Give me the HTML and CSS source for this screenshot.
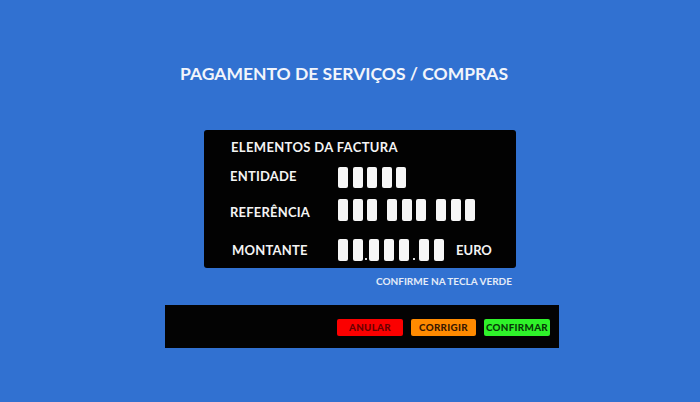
FILE: index.html
```html
<!DOCTYPE html>
<html>
<head>
<meta charset="utf-8">
<link rel="stylesheet" href="styles.css">
</head>
<body>
<div class="screen">
  <h1 class="title">PAGAMENTO DE SERVIÇOS / COMPRAS</h1>
  <div class="panel">
    <div class="panel-head">ELEMENTOS DA FACTURA</div>
    <div class="row row-ent">
      <div class="label">ENTIDADE</div>
      <div class="digits">
        <span class="d"></span><span class="d"></span><span class="d"></span><span class="d"></span><span class="d"></span>
      </div>
    </div>
    <div class="row row-ref">
      <div class="label">REFERÊNCIA</div>
      <div class="digits">
        <span class="d"></span><span class="d"></span><span class="d"></span>
        <span class="sp"></span>
        <span class="d"></span><span class="d"></span><span class="d"></span>
        <span class="sp"></span>
        <span class="d"></span><span class="d"></span><span class="d"></span>
      </div>
    </div>
    <div class="row row-mon">
      <div class="label label-mon">MONTANTE</div>
      <div class="digits digits-mon">
        <span class="d"></span><span class="d"></span>
        <span class="dot dot1"></span>
        <span class="d"></span><span class="d"></span><span class="d"></span>
        <span class="dot dot2"></span>
        <span class="d"></span><span class="d"></span>
        <span class="unit">EURO</span>
      </div>
    </div>
  </div>
  <div class="hint">CONFIRME NA TECLA VERDE</div>
  <div class="bar">
    <button class="btn btn-red">ANULAR</button>
    <button class="btn btn-orange">CORRIGIR</button>
    <button class="btn btn-green">CONFIRMAR</button>
  </div>
</div>
</body>
</html>
```
FILE: styles.css
```css
html, body {
  margin: 0;
  padding: 0;
}
body {
  width: 700px;
  height: 402px;
  background: #3171d1;
  font-family: Lato, "Open Sans", "DejaVu Sans", sans-serif;
  font-weight: 700;
  overflow: hidden;
}
.screen {
  display: flex;
  flex-direction: column;
  align-items: flex-start;
  padding-top: 64px;
}
.title {
  margin: 0 0 0 180px;
  font-size: 17.5px;
  line-height: 20px;
  font-weight: 700;
  color: #f2f5fb;
  letter-spacing: 0;
}
.panel {
  margin: 46px 0 0 204px;
  width: 312px;
  height: 138px;
  box-sizing: border-box;
  background: #020202;
  border-radius: 3px;
  padding: 10px 0 0 26px;
  color: #f4f4f4;
  font-size: 13px;
}
.panel-head {
  line-height: 14px;
  font-size: 13px;
  letter-spacing: 0.35px;
  padding-left: 1px;
}
.row {
  display: flex;
  align-items: center;
  height: 22px;
}
.row-ent { margin-top: 12px; }
.row-ref { margin-top: 11px; }
.row-mon { margin-top: 18px; }
.label {
  width: 108px;
  font-size: 13px;
  letter-spacing: 0.2px;
}
.row-ent .label { margin-top: -2px; }
.row-ref .label { margin-top: 3px; }
.label-mon { padding-left: 2px; width: 106px; }
.digits {
  display: flex;
  align-items: center;
  gap: 4.5px;
}
.d {
  width: 10px;
  height: 21px;
  background: #f6f6f6;
  border-radius: 2px;
}
.row-ref .d { height: 22px; }
.sp { width: 1px; }
.digits-mon { gap: 5px; align-items: center; }
.digits-mon .d { height: 22px; }
.dot {
  width: 2px;
  height: 2px;
  background: #ddd;
  align-self: flex-end;
  margin: 0 -3px 1px -3px;
}
.dot2 { margin: 0 -1px 1px -1px; }
.unit {
  margin-left: 7px;
  font-size: 13px;
}
.hint {
  margin: 7px 0 0 376px;
  font-size: 10px;
  line-height: 12px;
  color: #e3ebf8;
}
.bar {
  margin: 18px 0 0 165px;
  width: 394px;
  height: 43px;
  box-sizing: border-box;
  background: #030303;
  display: flex;
  justify-content: flex-end;
  align-items: center;
  gap: 8px;
  padding: 0 9px 0 0;
}
.btn {
  border: none;
  width: 66px;
  height: 17px;
  border-radius: 2px;
  padding: 0;
  font-family: Lato, "Open Sans", "DejaVu Sans", sans-serif;
  font-weight: 900;
  font-size: 9.8px;
  letter-spacing: 0.3px;
  margin-top: 1px;
}
.btn-red { background: #fb0000; color: #6a0000; }
.btn-orange { background: #ff8a00; color: #3a1800; width: 65px; }
.btn-green { background: #2ff22a; color: #073a07; }
```
